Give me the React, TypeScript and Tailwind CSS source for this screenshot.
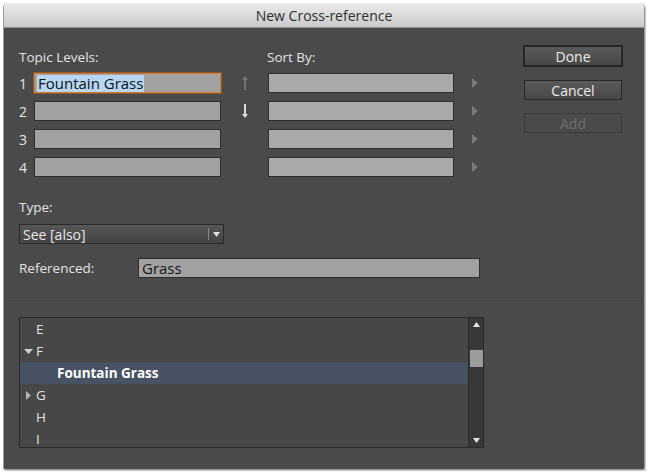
import React from "react";

const font = { fontFamily: '"Open Sans", "Liberation Sans", sans-serif' };

function UpArrow({ color }: { color: string }) {
  return (
    <svg width="8" height="16" viewBox="0 0 8 16">
      <path d="M4 1 L7 5 L5 5 L5 15 L3 15 L3 5 L1 5 Z" fill={color} />
    </svg>
  );
}
function DownArrow({ color }: { color: string }) {
  return (
    <svg width="8" height="16" viewBox="0 0 8 16">
      <path d="M4 15 L7 11 L5 11 L5 1 L3 1 L3 11 L1 11 Z" fill={color} />
    </svg>
  );
}
function RightTri({ color, w = 6, h = 10 }: { color: string; w?: number; h?: number }) {
  return (
    <svg width={w} height={h} viewBox={`0 0 ${w} ${h}`}>
      <path d={`M0 0 L${w} ${h / 2} L0 ${h} Z`} fill={color} />
    </svg>
  );
}
function DownTri({ color, w = 9, h = 5 }: { color: string; w?: number; h?: number }) {
  return (
    <svg width={w} height={h} viewBox={`0 0 ${w} ${h}`}>
      <path d={`M0 0 L${w} 0 L${w / 2} ${h} Z`} fill={color} />
    </svg>
  );
}

export default function App() {
  const rows = [1, 2, 3, 4];
  const list = [
    { t: "E", kind: "plain" },
    { t: "F", kind: "open" },
    { t: "Fountain Grass", kind: "sel" },
    { t: "G", kind: "closed" },
    { t: "H", kind: "plain" },
    { t: "I", kind: "plain" },
  ];
  return (
    <div className="w-[650px] h-[475px] bg-white pt-[3px] pl-[3px]" style={font}>
      <div className="w-[642px] h-[467px] rounded-t-[5px] rounded-b-[2px] overflow-hidden flex flex-col border border-[#9a9a9a] border-t-0 shadow-[1px_1px_1px_rgba(0,0,0,0.25)]">
        <div className="h-[25px] shrink-0 bg-gradient-to-b from-[#ececec] to-[#c9c9c9] border-b border-[#8e8e8e] flex items-center justify-center text-[14px] text-[#2e2e2e]">
          New Cross-reference
        </div>
        <div className="flex-1 bg-[#4a4a4a] flex flex-col pt-[17px] text-[#e4e4e4] text-[13.5px]">
          <div className="flex pl-[15px]">
            <div className="w-[504px] flex flex-col">
              <div className="flex mt-[5px] h-[14px] items-center">
                <div className="w-[248px]">Topic Levels:</div>
                <div>Sort By:</div>
              </div>
              <div className="flex flex-col gap-[8px] mt-[9px]">
                {rows.map((n) => (
                  <div key={n} className="flex items-center h-[20px]">
                    <div className="w-[15px] text-[14px]">{n}</div>
                    <div
                      className={
                        "w-[187px] h-[20px] bg-[#a2a2a2] border flex items-center " +
                        (n === 1
                          ? "border-[#d97a2a] outline outline-1 outline-[#8a5a30]"
                          : "border-[#2d2d2d]")
                      }
                    >
                      {n === 1 && (
                        <span className="ml-[2px] bg-[#b6d6f4] text-[#111] text-[15px] leading-[17px] px-[1px]">
                          Fountain Grass
                        </span>
                      )}
                    </div>
                    <div className="w-[47px] flex justify-center">
                      {n === 1 && <UpArrow color="#737373" />}
                      {n === 2 && <DownArrow color="#dcdcdc" />}
                    </div>
                    <div className="w-[186px] h-[20px] bg-[#a8a9a8] border border-[#2d2d2d]" />
                    <div className="ml-[18px] flex items-center">
                      <RightTri color="#7a7a7a" w={6} h={10} />
                    </div>
                  </div>
                ))}
              </div>
            </div>
            <div className="w-[100px] flex flex-col items-end">
              <div className="w-[100px] h-[22px] border-2 border-[#262626] bg-gradient-to-b from-[#5a5a5a] to-[#484848] flex items-center justify-center text-[14px] text-[#ececec]">
                Done
              </div>
              <div className="mt-[13px] w-[98px] h-[20px] border border-[#262626] bg-gradient-to-b from-[#5a5a5a] to-[#484848] flex items-center justify-center text-[14px] text-[#ececec] mr-[1px]">
                Cancel
              </div>
              <div className="mt-[13px] w-[98px] h-[20px] border border-[#3a3a3a] bg-[#4a4a4a] flex items-center justify-center text-[14px] text-[#6e6e6e] mr-[1px]">
                Add
              </div>
            </div>
          </div>
          <div className="pl-[15px] mt-[23px] h-[14px] flex items-center">Type:</div>
          <div className="ml-[15px] mt-[10px] w-[205px] h-[20px] border border-[#2a2a2a] bg-gradient-to-b from-[#555] to-[#444] flex items-center">
            <div className="flex-1 pl-[3px] text-[14px] text-[#e8e8e8]">See [also]</div>
            <div className="w-[1px] h-[12px] bg-[#888]" />
            <div className="w-[14px] flex justify-center">
              <DownTri color="#e0e0e0" w={7} h={5} />
            </div>
          </div>
          <div className="flex items-center pl-[15px] mt-[14px]">
            <div className="w-[119px]">Referenced:</div>
            <div className="w-[342px] h-[20px] bg-[#a2a2a2] border border-[#2d2d2d] flex items-center pl-[3px] text-[15px] text-[#151515]">
              Grass
            </div>
          </div>
          <div className="mt-[19px] h-[1px] bg-[#404040] ml-[4px]" />
          <div className="h-[1px] bg-[#515151] ml-[4px]" />
          <div className="ml-[15px] mt-[18px] w-[465px] h-[131px] border border-[#2a2a2a] bg-[#474747] flex">
            <div className="flex-1 flex flex-col overflow-hidden">
              {list.map((r, i) => (
                <div
                  key={i}
                  className={
                    "h-[22px] shrink-0 flex items-center text-[13.5px] " +
                    (r.kind === "sel" ? "bg-[#475263] font-bold text-white pl-[37px]" : "text-[#e2e2e2]")
                  }
                >
                  {r.kind === "plain" && <span className="pl-[16px]">{r.t}</span>}
                  {r.kind === "open" && (
                    <span className="flex items-center pl-[4px]">
                      <span className="w-[12px] flex justify-start pt-[1px]">
                        <DownTri color="#cfcfcf" w={9} h={5} />
                      </span>
                      <span>{r.t}</span>
                    </span>
                  )}
                  {r.kind === "closed" && (
                    <span className="flex items-center pl-[6px]">
                      <span className="w-[10px] flex">
                        <RightTri color="#b0b0b0" w={5} h={9} />
                      </span>
                      <span>{r.t}</span>
                    </span>
                  )}
                  {r.kind === "sel" && <span>{r.t}</span>}
                </div>
              ))}
            </div>
            <div className="w-[15px] bg-[#383838] border-l border-[#2a2a2a] flex flex-col items-center">
              <div className="mt-[4px]">
                <svg width="7" height="5" viewBox="0 0 7 5">
                  <path d="M3.5 0 L7 5 L0 5 Z" fill="#e6e6e6" />
                </svg>
              </div>
              <div className="mt-[23px] w-[13px] h-[17px] bg-[#9c9c9c]" />
              <div className="flex-1" />
              <div className="mb-[4px]">
                <svg width="7" height="5" viewBox="0 0 7 5">
                  <path d="M0 0 L7 0 L3.5 5 Z" fill="#e6e6e6" />
                </svg>
              </div>
            </div>
          </div>
        </div>
      </div>
    </div>
  );
}
